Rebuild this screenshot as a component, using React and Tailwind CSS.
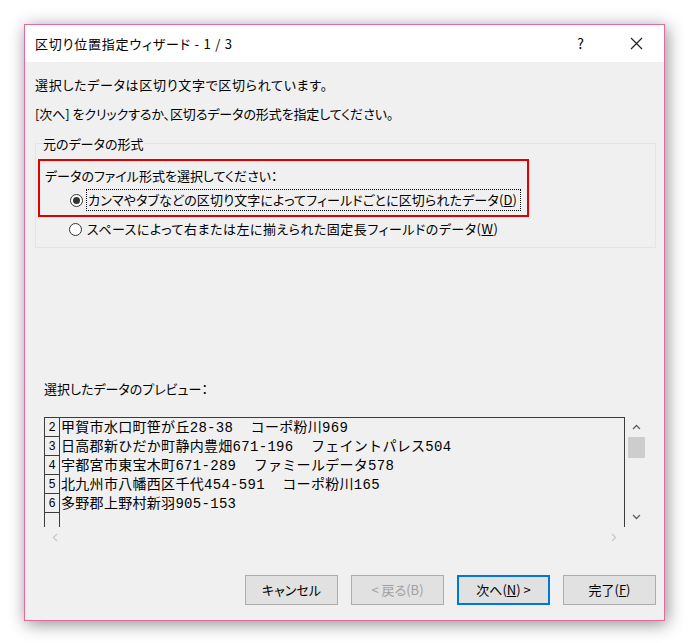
import React from "react";

const ui = {
  fontFamily: "'Noto Sans CJK JP', 'Noto Sans', sans-serif",
  fontFeatureSettings: "'palt'",
};

const mono = {
  fontFamily: "'Liberation Mono', 'Noto Sans CJK JP', monospace",
  fontFeatureSettings: "normal",
};

const rows = [
  { n: "2", text: "甲賀市水口町笹が丘28-38  コーポ粉川969" },
  { n: "3", text: "日高郡新ひだか町静内豊畑671-196  フェイントパレス504" },
  { n: "4", text: "宇都宮市東宝木町671-289  ファミールデータ578" },
  { n: "5", text: "北九州市八幡西区千代454-591  コーポ粉川165" },
  { n: "6", text: "多野郡上野村新羽905-153" },
];

function Radio({ checked }) {
  return (
    <span className="flex h-[13px] w-[13px] items-center justify-center rounded-full border border-[#333] bg-white">
      {checked && <span className="h-[7px] w-[7px] rounded-full bg-[#333]" />}
    </span>
  );
}

function Chevron({ up, color = "#606060" }) {
  return (
    <svg width="9" height="6" viewBox="0 0 9 6">
      <path
        d={up ? "M1 5 L4.5 1.5 L8 5" : "M1 1 L4.5 4.5 L8 1"}
        fill="none"
        stroke={color}
        strokeWidth="1.3"
      />
    </svg>
  );
}

function SideChevron({ left }) {
  return (
    <svg width="6" height="9" viewBox="0 0 6 9">
      <path
        d={left ? "M5 1 L1.5 4.5 L5 8" : "M1 1 L4.5 4.5 L1 8"}
        fill="none"
        stroke="#c8c8c8"
        strokeWidth="1.3"
      />
    </svg>
  );
}

function Button({ children, primary, disabled }) {
  return (
    <div
      className={`flex h-[30px] w-[93px] items-center justify-center bg-[#e1e1e1] text-[13px] ${
        primary ? "border-2 border-[#0078d7]" : "border border-[#adadad]"
      } ${disabled ? "text-[#a0a0a0]" : "text-black"}`}
    >
      {children}
    </div>
  );
}

export default function App() {
  return (
    <div className="h-[643px] w-[698px] bg-white pl-[24px] pt-[24px]" style={ui}>
      <div className="flex h-[597px] w-[641px] flex-col border border-[#e06c9c] bg-[#f0f0f0] shadow-[2px_3px_16px_rgba(0,0,0,0.45)]">
        {/* title bar */}
        <div className="flex h-[37px] shrink-0 items-center bg-white pl-[10px] text-[13px] text-black">
          <span className="tracking-[0.8px]">区切り位置指定ウィザード - 1 / 3</span>
          <span className="flex-1" />
          <span className="text-[14px]">?</span>
          <svg className="ml-[46px] mr-[21px]" width="13" height="13" viewBox="0 0 13 13">
            <path d="M1 1 L12 12 M12 1 L1 12" stroke="#222" strokeWidth="1.2" />
          </svg>
        </div>

        {/* body */}
        <div className="flex flex-1 flex-col pl-[10px] pr-[8px] pt-[8px] text-[13px] text-black">
          <div className="flex h-[29px] items-center tracking-[0.7px]">選択したデータは区切り文字で区切られています。</div>
          <div className="flex h-[29px] items-center tracking-[-0.1px]">[次へ] をクリックするか、区切るデータの形式を指定してください。</div>

          {/* group box */}
          <div className="mt-[15px] w-[621px] border border-[#e4e4e4] pb-[6px]">
            <div className="-mt-[9px] ml-[6px] flex h-[18px] w-fit items-center bg-[#f0f0f0] px-[1px]">元のデータの形式</div>
            <div className="ml-[2px] mt-[6px] w-[491px] border-2 border-[#e00000] pb-[3px] pt-[3px]">
              <div className="flex h-[24px] items-center pl-[5px]">データのファイル形式を選択してください：</div>
              <div className="flex h-[24px] items-center pl-[30px]">
                <Radio checked />
                <span className="ml-[3px] flex h-[22px] items-center border border-dotted border-black pl-[1px] pr-[3px] tracking-[0.15px]">
                  カンマやタブなどの区切り文字によってフィールドごとに区切られたデータ(<span className="underline">D</span>)
                </span>
              </div>
            </div>
            <div className="flex h-[24px] items-center pl-[33px]">
              <Radio />
              <span className="ml-[5px] tracking-[0.5px]">
                スペースによって右または左に揃えられた固定長フィールドのデータ(<span className="underline">W</span>)
              </span>
            </div>
          </div>

          {/* preview */}
          <div className="mt-[132px] flex h-[18px] items-center pl-[9px]">選択したデータのプレビュー：</div>
          <div className="ml-[9px] mt-[19px] flex">
            <div className="h-[110px] w-[581px] overflow-hidden border-x border-t border-[#3c3c3c]">
              {[...rows, { n: "", text: "" }].map((r, i) => (
                <div key={i} className="flex h-[19px]">
                  <div className="flex w-[15px] shrink-0 items-end justify-center border-b border-r border-[#3c3c3c] text-[12px] leading-[16px]" style={mono}>
                    {r.n}
                  </div>
                  <div className="whitespace-pre pl-[1px] text-[14px] leading-[20px] tracking-[0.3px]" style={mono}>
                    {r.text}
                  </div>
                </div>
              ))}
            </div>
            <div className="ml-[2px] flex w-[19px] flex-col items-center">
              <div className="flex h-[20px] items-center">
                <Chevron up />
              </div>
              <div className="h-[21px] w-[17px] bg-[#cdcdcd]" />
              <div className="flex-1" />
              <div className="flex h-[20px] items-center">
                <Chevron />
              </div>
            </div>
          </div>
          <div className="ml-[9px] flex h-[20px] w-[581px] items-center justify-between px-[8px]">
            <SideChevron left />
            <SideChevron />
          </div>

          {/* buttons */}
          <div className="mt-[28px] flex justify-end gap-[13px]">
            <Button>キャンセル</Button>
            <Button disabled>&lt; 戻る(B)</Button>
            <Button primary>
              次へ(<span className="underline">N</span>) &gt;
            </Button>
            <Button>
              完了(<span className="underline">F</span>)
            </Button>
          </div>
        </div>
      </div>
    </div>
  );
}
